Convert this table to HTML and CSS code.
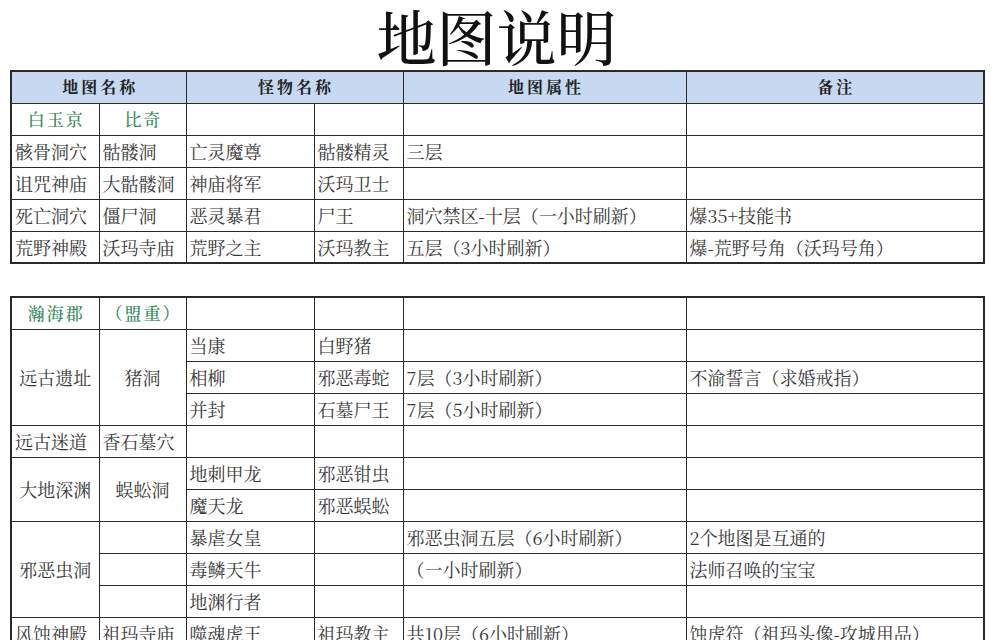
FILE: index.html
```html
<!DOCTYPE html>
<html lang="zh-CN">
<head>
<meta charset="utf-8">
<title>地图说明</title>
<link rel="stylesheet" href="styles.css">
</head>
<body>
<div class="page">
  <h1 class="title">地图说明</h1>

  <table class="grid">
    <colgroup>
      <col class="c1"><col class="c2"><col class="c3"><col class="c4"><col class="c5"><col class="c6">
    </colgroup>
    <tr class="head">
      <th colspan="2">地图名称</th>
      <th colspan="2">怪物名称</th>
      <th>地图属性</th>
      <th>备注</th>
    </tr>
    <tr>
      <td class="zone">白玉京</td>
      <td class="zone">比奇</td>
      <td></td><td></td><td></td><td></td>
    </tr>
    <tr>
      <td>骸骨洞穴</td><td>骷髅洞</td><td>亡灵魔尊</td><td>骷髅精灵</td><td>三层</td><td></td>
    </tr>
    <tr>
      <td>诅咒神庙</td><td>大骷髅洞</td><td>神庙将军</td><td>沃玛卫士</td><td></td><td></td>
    </tr>
    <tr>
      <td>死亡洞穴</td><td>僵尸洞</td><td>恶灵暴君</td><td>尸王</td><td>洞穴禁区-十层（一小时刷新）</td><td>爆35+技能书</td>
    </tr>
    <tr>
      <td>荒野神殿</td><td>沃玛寺庙</td><td>荒野之主</td><td>沃玛教主</td><td>五层（3小时刷新）</td><td>爆-荒野号角（沃玛号角）</td>
    </tr>
  </table>

  <table class="grid second">
    <colgroup>
      <col class="c1"><col class="c2"><col class="c3"><col class="c4"><col class="c5"><col class="c6">
    </colgroup>
    <tr>
      <td class="zone">瀚海郡</td>
      <td class="zone">（盟重）</td>
      <td></td><td></td><td></td><td></td>
    </tr>
    <tr>
      <td rowspan="3" class="mid">远古遗址</td>
      <td rowspan="3" class="mid">猪洞</td>
      <td>当康</td><td>白野猪</td><td></td><td></td>
    </tr>
    <tr>
      <td>相柳</td><td>邪恶毒蛇</td><td>7层（3小时刷新）</td><td>不渝誓言（求婚戒指）</td>
    </tr>
    <tr>
      <td>并封</td><td>石墓尸王</td><td>7层（5小时刷新）</td><td></td>
    </tr>
    <tr>
      <td>远古迷道</td><td>香石墓穴</td><td></td><td></td><td></td><td></td>
    </tr>
    <tr>
      <td rowspan="2" class="mid">大地深渊</td>
      <td rowspan="2" class="mid">蜈蚣洞</td>
      <td>地刺甲龙</td><td>邪恶钳虫</td><td></td><td></td>
    </tr>
    <tr>
      <td>魔天龙</td><td>邪恶蜈蚣</td><td></td><td></td>
    </tr>
    <tr>
      <td rowspan="3" class="mid">邪恶虫洞</td>
      <td></td><td>暴虐女皇</td><td></td><td>邪恶虫洞五层（6小时刷新）</td><td>2个地图是互通的</td>
    </tr>
    <tr>
      <td></td><td>毒鳞天牛</td><td></td><td>（一小时刷新）</td><td>法师召唤的宝宝</td>
    </tr>
    <tr>
      <td></td><td>地渊行者</td><td></td><td></td><td></td>
    </tr>
    <tr>
      <td>风蚀神殿</td><td>祖玛寺庙</td><td>噬魂虎王</td><td>祖玛教主</td><td>共10层（6小时刷新）</td><td>蚀虎符（祖玛头像-攻城用品）</td>
    </tr>
  </table>
</div>
</body>
</html>
```

FILE: styles.css
```css
html, body {
  margin: 0;
  padding: 0;
  background: #ffffff;
}

body {
  width: 993px;
  height: 640px;
  overflow: hidden;
  font-family: "Noto Serif CJK SC", "Noto Sans CJK SC", "Liberation Serif", serif;
  color: #383838;
}

.page {
  padding: 0 10px;
}

.title {
  margin: 0;
  height: 70px;
  line-height: 70px;
  text-align: center;
  font-size: 60px;
  font-weight: 500;
  color: #111111;
  letter-spacing: 0;
}

.grid {
  width: 973px;
  table-layout: fixed;
  border-collapse: collapse;
  border: 2px solid #2a2a2a;
}

.second {
  margin-top: 32px;
}

.c1 { width: 88px; }
.c2 { width: 87px; }
.c3 { width: 128px; }
.c4 { width: 89px; }
.c5 { width: 283px; }
.c6 { width: 298px; }

.grid tr {
  height: 32px;
}

.grid td,
.grid th {
  border: 1.5px solid #2a2a2a;
  padding: 0 0 0 3px;
  font-size: 18px;
  font-weight: 400;
  line-height: 20px;
  white-space: nowrap;
  overflow: hidden;
  text-align: left;
  vertical-align: middle;
}

.grid .head th {
  background: #c6d9f1;
  color: #222222;
  font-size: 16px;
  font-weight: 700;
  letter-spacing: 3px;
  text-indent: 3px;
  text-align: center;
  padding: 0;
}

.grid td.zone {
  color: #2f8a58;
  font-size: 17px;
  font-weight: 500;
  letter-spacing: 2px;
  text-indent: 2px;
  text-align: center;
  padding: 0;
}

.grid td.mid {
  text-align: center;
  padding: 0;
}
```
